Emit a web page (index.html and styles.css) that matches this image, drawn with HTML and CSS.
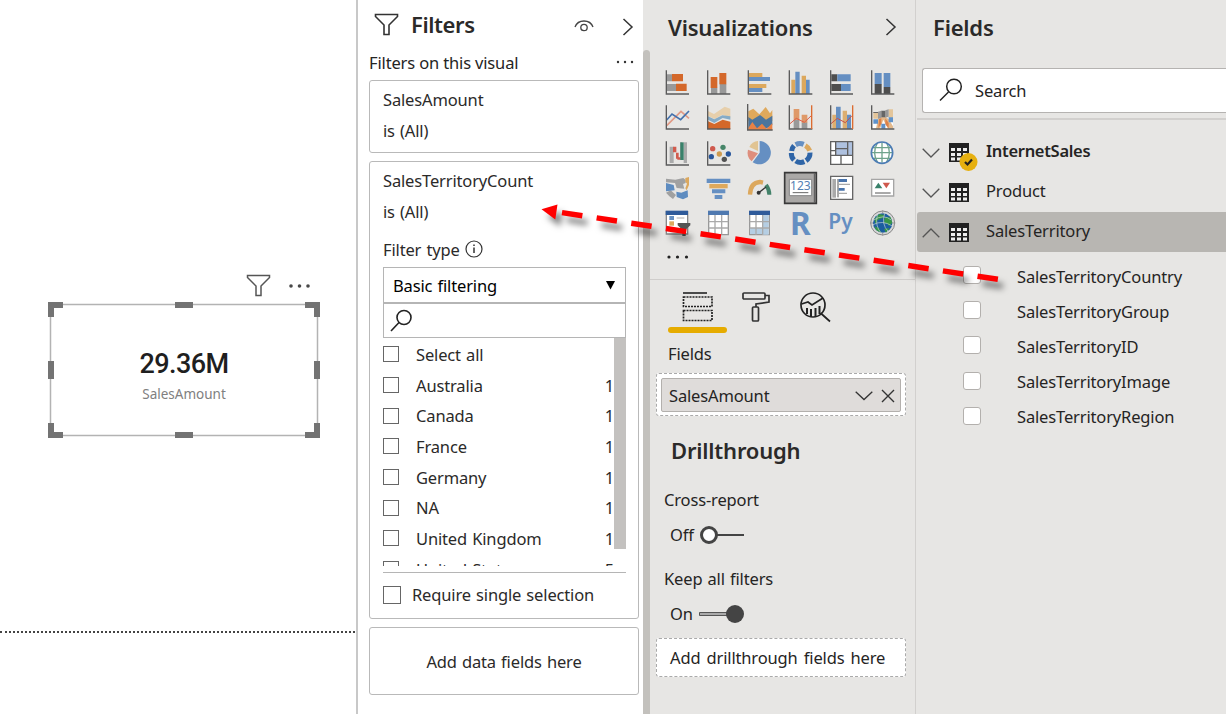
FILE: index.html
```html
<!DOCTYPE html>
<html lang="en">
<head>
<meta charset="utf-8">
<title>Report editor</title>
<link rel="stylesheet" href="styles.css">
</head>
<body>
<div class="app">
  <main class="canvas">
    <div class="visual-tools">
      <svg width="26" height="24" viewBox="0 0 26 24" fill="none" stroke="#555" stroke-width="1.5"><path d="M1.5 1.5H23.5V3.5L15 12V21.5H10V12L1.5 3.5Z"/></svg>
      <svg class="visual-more" width="24" height="6" viewBox="0 0 24 6" fill="#484848"><circle cx="3" cy="3" r="1.8"/><circle cx="11.5" cy="3" r="1.8"/><circle cx="20" cy="3" r="1.8"/></svg>
    </div>
    <div class="visual">
      <svg class="handles" width="272" height="137" viewBox="0 0 272 137"><rect x="2.5" y="2.5" width="267" height="131" fill="none" stroke="#b3b3b3" stroke-width="1.5"/><g fill="#737373"><path d="M0 0H15V6H6V15H0ZM272 0H257V6H266V15H272ZM0 136H15V130H6V121H0ZM272 136H257V130H266V121H272Z"/><path d="M127 0h18v6h-18zM127 130h18v6h-18zM0 59h6v18H0zM266 59h6v18h-6z"/></g></svg>
      <div class="kpi">29.36M</div>
      <div class="kpi-label">SalesAmount</div>
    </div>
    <div class="page-edge"></div>
  </main>

  <section class="filters">
    <header class="filters-head">
      <svg width="26" height="24" viewBox="0 0 26 24" fill="none" stroke="#333" stroke-width="1.6"><path d="M1.5 1.5H23.500V3.500L15 12V21.500H10V12L1.500 3.500Z"/></svg>
      <h2 class="title t-filters">Filters</h2>
      <svg class="eye" width="20" height="14" viewBox="0 0 20 14" fill="none" stroke="#444" stroke-width="1.3"><path d="M1 8C4 0 16 0 19 8"/><circle cx="10" cy="8.5" r="3.2"/></svg>
      <svg class="collapse" width="12" height="18" viewBox="0 0 12 18" fill="none" stroke="#333" stroke-width="1.5"><path d="M1.5 1L10 9L1.5 17"/></svg>
    </header>
    <div class="filters-sub"><span class="t-sub">Filters on this visual</span>
      <svg width="18" height="4" viewBox="0 0 18 4" fill="#333"><circle cx="2" cy="2" r="1.2"/><circle cx="9" cy="2" r="1.2"/><circle cx="16" cy="2" r="1.2"/></svg>
    </div>
    <div class="card card-amount"><p>SalesAmount</p><p>is (All)</p></div>
    <div class="card card-territory">
      <p>SalesTerritoryCount</p><p>is (All)</p>
      <div class="filter-type">Filter type
        <svg width="18" height="18" viewBox="0 0 18 18" fill="none" stroke="#333" stroke-width="1.2"><circle cx="9" cy="9" r="8"/><path d="M9 7.5V13M9 4.5V6" stroke-width="1.5"/></svg>
      </div>
      <div class="select">Basic filtering<svg width="10" height="9" viewBox="0 0 10 9"><path d="M0 0H9L4.5 8.5Z"/></svg></div>
      <div class="find"><svg width="24" height="24" viewBox="0 0 24 24" fill="none" stroke="#222" stroke-width="1.6"><circle cx="14" cy="8.5" r="7"/><path d="M9 13.5L1 22"/></svg></div>
      <div class="list-wrap">
        <ul class="list">
          <li><i class="box"></i><span>Select all</span></li>
          <li><i class="box"></i><span>Australia</span><b>1</b></li>
          <li><i class="box"></i><span>Canada</span><b>1</b></li>
          <li><i class="box"></i><span>France</span><b>1</b></li>
          <li><i class="box"></i><span>Germany</span><b>1</b></li>
          <li><i class="box"></i><span>NA</span><b>1</b></li>
          <li><i class="box"></i><span>United Kingdom</span><b>1</b></li>
          <li><i class="box"></i><span>United States</span><b>5</b></li>
        </ul>
        <div class="thumb"></div>
      </div>
      <div class="single"><i class="box big"></i><span>Require single selection</span></div>
    </div>
    <div class="card card-add">Add data fields here</div>
  </section>
  <div class="pane-scroll"><div></div></div>

  <section class="viz">
    <header class="viz-head"><h2 class="title t-viz">Visualizations</h2>
      <svg width="12" height="18" viewBox="0 0 12 18" fill="none" stroke="#333" stroke-width="1.5"><path d="M1.5 1L10 9L1.5 17"/></svg>
    </header>
    <div class="gallery">
      <svg viewBox="30 27 78 81"><path fill="#999" d="M36 43h15v21H36zM36 72h27v21H36z"/><path fill="#d4682a" d="M51 42h33v22H51zM63 71h32v22H63z"/><path class="axis" d="M34 31V102H102"/></svg>
      <svg viewBox="153 27 78 81"><path fill="#999" d="M168 83h19v19h-19zM194 72h20v30h-20z"/><path fill="#d4682a" d="M167 51h20v33h-20zM193 39h21v34h-21z"/><path class="axis" d="M158 31V102H226"/></svg>
      <svg viewBox="276 27 78 81"><path fill="#dca85d" d="M282 39h40v12h-40zM282 72h52v12h-52z"/><path fill="#658fc2" d="M282 51h63v12h-63zM282 84h40v12h-40z"/><path class="axis" d="M280 31V102H349"/></svg>
      <svg viewBox="24 27 78 81"><path fill="#dca85d" d="M34 59h12v43H34zM65 47h13v55H65z"/><path fill="#658fc2" d="M46 35h13v67H46zM78 59h11v43H78z"/><path class="axis" d="M28 31V102H97"/></svg>
      <svg viewBox="147 27 78 81"><path fill="#4e4e4e" d="M154 43h18v21h-18zM154 72h29v21h-29z"/><path fill="#658fc2" d="M172 43h40v21h-40zM183 72h29v21h-29z"/><path class="axis" d="M152 31V102H219"/></svg>
      <svg viewBox="270 27 78 81"><path fill="#658fc2" d="M284 39h21v34h-21zM311 39h20v42h-20z"/><path fill="#4e4e4e" d="M284 72h21v30h-21zM311 81h20v21h-20z"/><path class="axis" d="M275 31V102H343"/></svg>

      <svg viewBox="30 133 78 81"><g fill="none" stroke-width="5"><path stroke="#e19a86" d="M35 198L78 155L102 176"/><path stroke="#4471ad" d="M35 181L51 163L77 180L102 154"/></g><path class="axis" d="M34 137V208H102"/></svg>
      <svg viewBox="153 133 78 81"><path fill="#e7cfab" d="M159 154L177 163L209 141L226 147V174L202 165L179 178L159 169Z"/><path fill="#86abc6" d="M159 170L178 179L202 167L226 170V180L203 175L178 190L159 180Z"/><path fill="#d4682a" d="M159 185L178 193L203 180L226 186V208H159Z"/><path class="axis" d="M158 137V208H226"/></svg>
      <svg viewBox="276 133 78 81"><path fill="#dfa95c" d="M280 155L295 147L313 164L332 142L345 161L352 151V184H280Z"/><path fill="#4c759d" d="M280 172L292 180L315 166L333 180L352 168V196L333 207H280Z"/><path fill="#e98245" d="M280 205L292 187L306 206L321 192L335 207L352 191V211H280Z"/><path class="axis" d="M278 133V211H353"/></svg>
      <svg viewBox="24 133 78 81"><path fill="#df9968" d="M41 148h17v35H41zM65 165h17v25H65z"/><path fill="#999" d="M41 181h17v27H41zM65 189h17v19H65z"/><path fill="none" stroke="#df5b45" stroke-width="3" d="M30 192L49 176L73 188L94 168"/><path class="axis" d="M28 137V208H97"/><path stroke="#dc6c31" stroke-width="4" d="M95 137V208"/></svg>
      <svg viewBox="147 133 78 81"><path fill="#dcae70" d="M157 165h11v43h-11zM188 153h13v55h-13z"/><path fill="#658fc2" d="M168 141h14v67h-14zM201 165h12v43h-12z"/><path fill="none" stroke="#c85047" stroke-width="3" d="M153 192L172 176L196 189L216 168"/><path class="axis" d="M152 137V208H219"/><path stroke="#dc6c31" stroke-width="4" d="M218 137V208"/></svg>
      <svg viewBox="270 133 78 81"><path fill="#fff" d="M279 176h60v31h-60z"/><path fill="#e3b98c" d="M294 178L304 172H316L326 178L339 200V207H324L310 180L300 207H288Z"/><path fill="#e3c59a" d="M280 157h14v20h-14zM326 149h13v25h-13z"/><path fill="#999" d="M294 156L304 153V174L294 178ZM316 152L326 149V171L316 174Z"/><path fill="#666" d="M280 157h14v3h-14zM304 153h12v20h-12z"/><path fill="#dd8147" d="M297 178L304 176V192L295 205ZM316 176L326 190V206L316 194Z"/><path fill="#5f92ca" d="M280 179h14v13h-14zM304 192h12v15h-12zM326 173h13v15h-13z"/><path class="axis" d="M275 137V208H343"/></svg>

      <svg viewBox="30 239 78 81"><path fill="#aaa" d="M44 259h12v49H44zM75 246h6v53H75zM86 246h10v62H86z"/><path fill="#d15b4d" d="M54 259h10v17H54zM63 277h8v18H63zM67 291h10v7H67z"/><path fill="#39816a" d="M76 246h10v53H76z"/><path class="axis" d="M34 243V314H102"/></svg>
      <svg viewBox="153 239 78 81"><circle cx="173" cy="265" r="8" fill="#cf594d"/><circle cx="204" cy="261" r="8" fill="#468568"/><circle cx="193" cy="281" r="8" fill="#cf9b50"/><circle cx="220" cy="281" r="8" fill="#29569b"/><circle cx="169" cy="289" r="8" fill="#29569b"/><circle cx="208" cy="297" r="8" fill="#525252"/><path class="axis" d="M158 243V314H226"/></svg>
      <svg viewBox="276 239 78 81"><path fill="#658fc2" d="M314 277V242A35 35 0 1 1 293 306Z"/><path fill="#de8e7d" d="M309 279L290 303A34 34 0 0 1 279 268Z"/><path fill="#e1c493" d="M309 272L283 260A32 32 0 0 1 309 242Z"/></svg>
      <svg viewBox="24 239 78 81"><g fill="none" stroke-width="15"><path stroke="#658fc2" d="M47 253A28 28 0 0 1 71 252"/><path stroke="#dca85d" d="M76 256A28 28 0 0 1 89 271"/><path stroke="#2f65a7" d="M90 277A28 28 0 0 1 78 301M73 304A28 28 0 0 1 47 302M42 299A28 28 0 0 1 34 278M35 272A28 28 0 0 1 42 256"/></g></svg>
      <svg viewBox="147 239 78 81"><path fill="#fff" d="M152 244h66v68h-66z"/><path fill="#aec1df" d="M168 245h49v40h-49z"/><path fill="none" stroke="#606060" stroke-width="4" d="M152 244H218V312H152ZM152 285H218M167 244V285M183 285V312M167 265H203M203 244V285M152 271H167"/></svg>
      <svg viewBox="270 239 78 81"><circle cx="306" cy="277" r="32" fill="#fff"/><g fill="none" stroke="#6fa38c" stroke-width="4"><path d="M292 248Q276 277 292 305M320 248Q336 277 320 305M306 246V307M277 262H335M274 277H338M277 294H335"/></g><circle cx="306" cy="277" r="32" fill="none" stroke="#4c7cb4" stroke-width="5"/></svg>

      <svg viewBox="30 30 78 81"><path fill="#a1a1a1" d="M33 41L61 44L85 39L92 45V54L84 57L88 71L65 69L60 54L33 52ZM33 83L47 76L63 90L54 102L43 94Z"/><path fill="#5e8cc0" d="M33 54L56 60L59 76L33 79ZM64 80L79 83L98 76L99 96L84 103L65 96Z"/><path fill="#dca85d" d="M91 39L102 36V60L95 76L91 70L96 56L91 50Z"/></svg>
      <svg viewBox="153 30 78 81"><path fill="#658fc2" d="M155 41h71v13h-71zM171 73h40v12h-40zM179 90h23v12h-23z"/><path fill="#dfa95c" d="M163 57h55v13h-55z"/></svg>
      <svg viewBox="276 30 78 81"><path fill="none" stroke="#dca85d" stroke-width="13" d="M285 89Q286 53 315 51L324 53"/><path fill="none" stroke="#438269" stroke-width="12" d="M333 60Q343 73 343 89"/><path stroke="#333" stroke-width="4" d="M311 83L333 66"/><circle cx="311" cy="83" r="6" fill="#333"/></svg>
      <svg viewBox="24 30 78 81"><path fill="#aaa8a6" stroke="#393939" stroke-width="5" d="M14 23H109V115H14Z"/><path stroke="#555" stroke-width="3" d="M103 25V113"/><path fill="#fff" stroke="#858585" stroke-width="3" d="M28 43H95V92H28Z"/><text x="61" y="75" text-anchor="middle" class="icon-num">123</text><path stroke="#666" stroke-width="3" d="M38 83H85"/></svg>
      <svg viewBox="147 30 78 81"><path fill="#fff" stroke="#666" stroke-width="4" d="M152 34H218V103H152Z"/><path fill="#aaa" d="M157 42h11v56h-11z"/><path stroke="#555" stroke-width="3" d="M174 42V97"/><path fill="#4974ac" d="M176 42h25v9h-25zM176 69h18v8h-18z"/><path stroke="#aaa" stroke-width="4" d="M176 58H210M176 85H201"/></svg>
      <svg viewBox="270 30 78 81"><path fill="#fff" stroke="#a5a5a5" stroke-width="4" d="M275 43H341V93H275Z"/><path fill="#39816a" d="M284 70L295 53L307 70Z"/><path fill="#cf594d" d="M308 53H330L319 70Z"/><path stroke="#555" stroke-width="3" d="M285 84H332"/></svg>

      <svg viewBox="30 136 78 81"><path fill="#fff" stroke="#888" stroke-width="4" d="M34 141H98V208H34Z"/><path fill="#2f5b9a" d="M32 138h67v13H32z"/><path fill="#658fc2" d="M43 154h14v12H43z"/><path fill="#dca85d" d="M43 170h14v13H43z"/><path stroke="#aaa" stroke-width="3" d="M65 160H88"/><path fill="#555" d="M68 175H106V182L92 195V214H82V195L68 182Z"/></svg>
      <svg viewBox="153 136 78 81"><path fill="#fff" stroke="#999" stroke-width="4" d="M161 141H220V210H161Z"/><path fill="none" stroke="#aaa" stroke-width="4" d="M161 171H220M161 190H220M180 151V210M200 151V210"/><path fill="#4f79b0" d="M159 138h63v13h-63z"/></svg>
      <svg viewBox="276 136 78 81"><path fill="#fff" stroke="#999" stroke-width="4" d="M284 141H343V210H284Z"/><path fill="#b5cee3" d="M323 151h18v59h-18zM285 190h56v18h-56z"/><path fill="none" stroke="#aaa" stroke-width="4" d="M284 171H343M284 190H343M303 151V210M323 151V210"/><path fill="#2f5b9a" d="M282 138h63v13h-63z"/></svg>
      <svg viewBox="24 136 78 81"><text x="30" y="210" class="icon-r" textLength="62" lengthAdjust="spacingAndGlyphs">R</text></svg>
      <svg viewBox="147 136 78 81"><text x="145" y="193" class="icon-py" textLength="73" lengthAdjust="spacingAndGlyphs">Py</text></svg>
      <svg viewBox="270 136 78 81"><circle cx="308" cy="175" r="36" fill="#d8d8d8" stroke="#888" stroke-width="3"/><circle cx="308" cy="175" r="29" fill="#1c5da0"/><path fill="#389647" d="M283 163L298 148L314 151L309 159L293 166L287 179ZM314 158L332 158L337 174L327 184L321 176L312 175ZM283 185L297 190L303 204L289 197ZM312 193L329 190L318 204Z"/><g fill="none" stroke="#c6d5d2" stroke-width="2"><path d="M281 166Q311 147 334 166M279 180Q307 165 337 184M292 151Q284 184 304 206M314 146Q303 178 325 201"/></g><path stroke="#999" stroke-width="3" d="M308 137V146M308 204V213M270 175H279M337 175H346"/></svg>
    </div>
    <svg class="more" width="24" height="4" viewBox="0 0 24 4" fill="#222"><circle cx="2" cy="2" r="1.6"/><circle cx="10.500" cy="2" r="1.6"/><circle cx="19.500" cy="2" r="1.6"/></svg>
    <div class="tabs">
      <svg width="34" height="32" viewBox="0 0 34 32" fill="none" stroke="#222"><path stroke-width="1.6" d="M2 2H26"/><path stroke-width="1.7" stroke-dasharray="2 1" d="M2.5 6H31V15.5H2.5ZM2.5 19.5H31V29.5H2.5Z"/></svg>
      <svg width="32" height="32" viewBox="0 0 32 32" fill="none" stroke="#333" stroke-width="1.7"><rect x="2" y="2" width="22" height="6" rx="1"/><path d="M24 4.5H28V11L15 13V16"/><rect x="11.5" y="16" width="6" height="14" rx="1"/></svg>
      <svg width="32" height="32" viewBox="0 0 32 32" fill="none" stroke="#222" stroke-width="1.7"><circle cx="14" cy="14" r="12"/><path d="M2.5 13L9 11L13 14L24 7M21.5 22L31 30.500"/><path stroke-width="2" d="M8 17V23M12 18V26M16.500 17V26M20.500 15V23"/></svg>
    </div>
    <div class="tab-mark"></div>
    <div class="well-label">Fields</div>
    <div class="well"><div class="pill"><span>SalesAmount</span>
      <svg class="pill-down" width="18" height="10" viewBox="0 0 18 10" fill="none" stroke="#333" stroke-width="1.3"><path d="M.7 .7L9 8.500L17.300 .7"/></svg>
      <svg width="14" height="14" viewBox="0 0 14 14" fill="none" stroke="#333" stroke-width="1.4"><path d="M1 1L13 13M13 1L1 13"/></svg></div></div>
    <h2 class="title t-drill">Drillthrough</h2>
    <div class="opt opt-cross">Cross-report</div>
    <div class="toggle"><span>Off</span><svg width="46" height="20" viewBox="0 0 46 20"><path stroke="#444" stroke-width="2" d="M18 10H45"/><circle cx="10" cy="10" r="7.500" fill="#fff" stroke="#444" stroke-width="3"/></svg></div>
    <div class="opt opt-keep">Keep all filters</div>
    <div class="toggle"><span>On</span><svg width="46" height="20" viewBox="0 0 46 20"><path fill="#aaa" stroke="#555" d="M.500 8.500H30V11.500H.500Z"/><circle cx="36" cy="10" r="9" fill="#444"/></svg></div>
    <div class="drop">Add drillthrough fields here</div>
  </section>

  <section class="fields">
    <h2 class="title t-fields">Fields</h2>
    <div class="search"><svg width="24" height="24" viewBox="0 0 24 24" fill="none" stroke="#222" stroke-width="1.500"><circle cx="15" cy="8.500" r="7.300"/><path d="M9.500 14L1 22.500"/></svg><span>Search</span></div>
    <div class="tree">
      <div class="table strong">
        <svg class="chev" width="18" height="10" viewBox="0 0 18 10"><path d="M.7 .7L9 9L17.300 .7"/></svg>
        <svg class="grid" width="30" height="28" viewBox="0 0 30 28"><path fill="#222" d="M0 0h20v19H0z"/><path fill="#eee" d="M2 5h4v3H2zM8 5h4v3H8zM14 5h4v3h-4zM2 10h4v3H2zM8 10h4v3H8zM14 10h4v3h-4zM2 14.500h4v3H2zM8 14.500h4v3H8zM14 14.500h4v3h-4z"/><circle cx="19.500" cy="19" r="9" fill="#e6b010"/><path fill="none" stroke="#222" stroke-width="2.200" d="M16 19L18.500 21.500L23 16.500"/></svg>
        <span>InternetSales</span></div>
      <div class="table">
        <svg class="chev" width="18" height="10" viewBox="0 0 18 10"><path d="M.7 .7L9 9L17.300 .7"/></svg>
        <svg class="grid" width="30" height="28" viewBox="0 0 30 28"><path fill="#222" d="M0 0h20v19H0z"/><path fill="#eee" d="M2 5h4v3H2zM8 5h4v3H8zM14 5h4v3h-4zM2 10h4v3H2zM8 10h4v3H8zM14 10h4v3h-4zM2 14.500h4v3H2zM8 14.500h4v3H8zM14 14.500h4v3h-4z"/></svg>
        <span>Product</span></div>
      <div class="table open">
        <svg class="chev" width="18" height="10" viewBox="0 0 18 10"><path d="M.7 9.300L9 1L17.300 9.300"/></svg>
        <svg class="grid" width="30" height="28" viewBox="0 0 30 28"><path fill="#222" d="M0 0h20v19H0z"/><path fill="#eee" d="M2 5h4v3H2zM8 5h4v3H8zM14 5h4v3h-4zM2 10h4v3H2zM8 10h4v3H8zM14 10h4v3h-4zM2 14.500h4v3H2zM8 14.500h4v3H8zM14 14.500h4v3h-4z"/></svg>
        <span>SalesTerritory</span></div>
      <div class="columns">
        <label><i></i>SalesTerritoryCountry</label>
        <label><i></i>SalesTerritoryGroup</label>
        <label><i></i>SalesTerritoryID</label>
        <label><i></i>SalesTerritoryImage</label>
        <label><i></i>SalesTerritoryRegion</label>
      </div>
    </div>
  </section>
  <svg class="drag-arrow" width="1226" height="714" viewBox="0 0 1226 714"><g><path fill="none" stroke="#f00" stroke-width="5.500" stroke-dasharray="20.600 14.430" d="M562 212.600L998 279.300"/><path fill="#f00" d="M541.500 209.300L557.500 204.500L555.300 219.500Z"/></g></svg>
</div>
</body>
</html>
```
FILE: styles.css
```css
* { box-sizing: border-box; }
body { margin: 0; font: 16.5px/24px "Noto Sans", "Open Sans", sans-serif; letter-spacing: -0.15px; word-spacing: 1px; color: #252423; }
h2, p, ul { margin: 0; padding: 0; }
svg { display: block; flex: none; }
.title { font-size: 22px; line-height: 30px; font-weight: 600; letter-spacing: -0.2px; color: #2b2a29; }
.app { position: relative; display: flex; width: 1226px; height: 714px; overflow: hidden; background: #fff; }

.canvas { width: 356px; padding-top: 274px; }
.visual-tools { display: flex; padding-left: 246px; height: 28px; }
.visual-more { margin: 9px 0 0 16px; }
.visual { position: relative; width: 272px; height: 137px; margin-left: 48px; padding-top: 46px; text-align: center; }
.handles { position: absolute; left: 0; top: 0; }
.kpi { font: 500 27px/32px Roboto, sans-serif; letter-spacing: -0.6px; color: #1f1f1f; }
.kpi-label { font-size: 13.5px; line-height: 20px; margin-top: 4px; color: #808080; letter-spacing: 0; }
.page-edge { margin-top: 192px; border-top: 2px dotted #444; width: 355px; }

.filters { width: 287px; padding: 8px 4px 0 11px; border-left: 2px solid #c8c8c8; }
.filters-head { display: flex; height: 34px; padding-left: 5px; }
.filters-head > svg:first-child { margin-top: 5px; }
.filters-head .title { width: 163px; padding-left: 11px; line-height: 32px; letter-spacing: -0.4px; }
.eye { margin: 11px 0 0 11px; }
.collapse { margin: 10px 0 0 28px; }
.filters-sub { display: flex; justify-content: space-between; align-items: center; height: 37px; padding: 4px 5px 0 0; word-spacing: 0; }
.filters-sub svg { margin-top: -2px; }
.card { border: 1.5px solid #b9b9b9; border-radius: 3px; padding-left: 13px; color: #2b2a29; }
.card p { line-height: 31px; }
.card-amount { height: 73px; margin-top: 1px; padding-top: 3px; }
.card-territory { height: 458px; margin-top: 8px; padding-top: 3px; }
.card-add { height: 68px; margin-top: 8px; padding: 0; text-align: center; line-height: 67px; }
.filter-type { display: flex; gap: 5px; height: 40px; padding-top: 11px; }
.filter-type svg { margin-top: 2px; }
.select { display: flex; justify-content: space-between; align-items: center; width: 243px; height: 36px; padding: 1px 9px 0; border: 1.5px solid #b5b5b5; color: #000; }
.find { width: 243px; height: 35px; padding: 5px 6px; border: 1.5px solid #b5b5b5; border-top-width: 1px; }
.list-wrap { display: flex; width: 243px; height: 228px; overflow: hidden; }
.list { width: 231px; list-style: none; }
.list li { display: flex; height: 30.7px; align-items: center; padding-top: 3px; }
.list span { margin-left: 17px; }
.list b { margin-left: auto; font-weight: 400; }
.list .box { margin-top: -1px; }
.box { flex: none; width: 16px; height: 16px; border: 1.5px solid #333; outline: 0.5px solid #666; outline-offset: -1px; }
.big { width: 18px; height: 18px; border-color: #555; }
.thumb { width: 12px; height: 211px; background: #c3c1bf; }
.single { display: flex; align-items: center; width: 243px; height: 45px; margin-top: 6px; border-top: 1.5px solid #b5b5b5; }
.single span { margin-left: 11px; }
.pane-scroll { width: 7px; background: #e7e6e4; padding-top: 50px; }
.pane-scroll div { height: 664px; background: #c3c1bd; border-radius: 4px 4px 0 0; }

.viz { width: 265px; padding-top: 13px; background: #e7e6e4; }
.viz-head { display: flex; justify-content: space-between; padding: 0 18px 0 18px; height: 56px; }
.viz-head .title, .t-fields { margin-top: -1px; }
.viz-head svg { margin-top: 5px; }
.gallery { display: grid; grid-template-columns: repeat(6, 26px); grid-auto-rows: 27px; gap: 8.33px 15px; padding-left: 15px; }
.gallery svg { width: 26px; height: 27px; overflow: visible; }
.axis { fill: none; stroke: #5b5b5b; stroke-width: 4; }
.icon-num { font: 36px "Noto Sans", sans-serif; letter-spacing: 0; fill: #5580b3; }
.icon-r { font: 700 98px "Noto Sans", sans-serif; letter-spacing: 0; fill: #658fc2; }
.icon-py { font: 600 66px "Noto Sans", sans-serif; letter-spacing: 0; fill: #658fc2; }
.more { margin: 18px 0 0 17px; }
.tabs { display: flex; height: 48px; margin-top: 20px; padding: 11px 0 0 31px; border-top: 1.5px solid #cfcdcb; }
.tabs svg + svg { margin-left: 26px; }
.tab-mark { width: 59px; height: 6px; margin-left: 18px; border-radius: 3px; background: #e6ac00; }
.well-label { margin: 9px 0 0 18px; }
.well { width: 250px; height: 43px; margin: 7px 0 0 6px; padding: 5px 4px; border: 1.5px dashed #aaa; border-radius: 3px; background: #fff; }
.pill { display: flex; align-items: center; height: 34px; margin-top: -1px; padding: 1px 5px 0 7px; border: 1.5px solid #b3b0ad; border-radius: 2px; background: #dfdcda; }
.pill-down { margin: 0 8px 0 auto; }
.t-drill { margin: 19px 0 0 21px; }
.opt { padding-left: 14px; }
.opt-cross { margin-top: 23px; }
.toggle { display: flex; align-items: center; height: 24px; padding-left: 20px; margin-top: 11px; }
.toggle span { width: 29px; }
.opt-keep { margin-top: 20px; }
.drop { width: 250px; height: 39px; margin: 12px 0 0 6px; padding-left: 13px; line-height: 37px; border: 1.5px dashed #aaa; border-radius: 3px; background: #fff; word-spacing: 2px; }

.fields { flex: 1; padding-top: 13px; background: #e7e6e4; border-left: 1.5px solid #d2d0ce; }
.t-fields { padding-left: 17px; }
.search { display: flex; align-items: center; height: 45px; margin: 26px 0 0 6px; padding-left: 16px; border: 1.5px solid #b5b3b1; border-right: 0; border-radius: 3px 0 0 3px; background: #fff; }
.search svg { margin-top: -2px; }
.search span { margin-left: 12px; }
.tree { margin: 5px 0 0 1px; padding-top: 12px; border-top: 2px solid #d2d0ce; }
.table { display: flex; height: 40px; padding-left: 5px; }
.table span { line-height: 38px; margin-left: 7px; }
.strong { font-weight: 600; letter-spacing: -0.3px; }
.open { background: #b8b6b2; border-radius: 3px 0 0 3px; }
.chev { margin-top: 16px; fill: none; stroke: #555; stroke-width: 1.3; }
.grid { margin: 11px 0 0 9px; }
.columns { padding-top: 7px; }
.columns label { display: flex; align-items: center; height: 35.2px; padding-left: 46px; }
.columns i { width: 18px; height: 18px; margin: -3px 36px 0 0; border: 1.5px solid #b3b0ad; border-radius: 3px; background: #fff; }

.drag-arrow { position: absolute; left: 0; top: 0; }
.drag-arrow g { filter: drop-shadow(5px 7px 3px rgba(0, 0, 0, 0.5)); }
```
